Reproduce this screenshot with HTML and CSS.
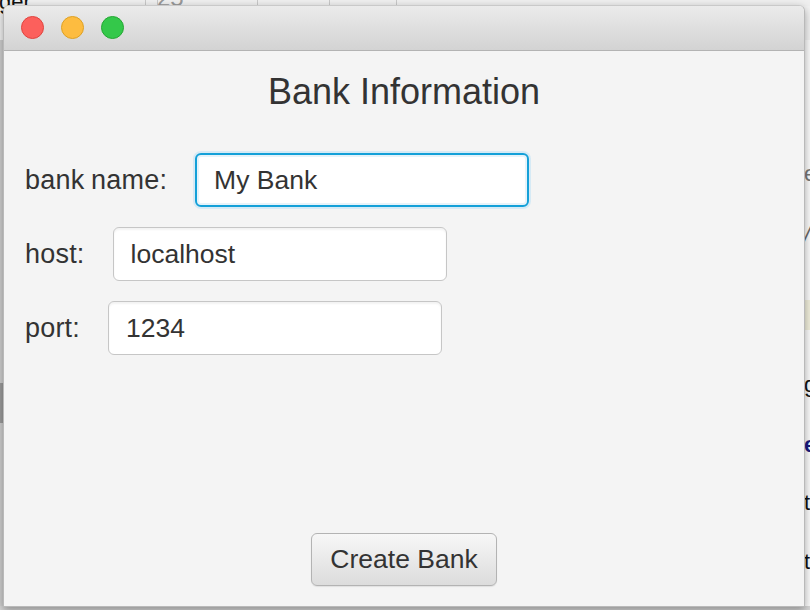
FILE: index.html
```html
<!DOCTYPE html>
<html>
<head>
<meta charset="utf-8">
<link rel="stylesheet" href="styles.css">
</head>
<body>
<div class="desk">
  <div class="desk-top"></div>
  <span class="frag frag-ger">ger</span>
  <span class="frag frag-25">25</span>
  <span class="vline v1"></span>
  <span class="vline v2"></span>
  <span class="vline v3"></span>
  <span class="vline v4"></span>
  <span class="vline v5"></span>
  <div class="desk-left"></div>
  <div class="desk-left-band"></div>
  <span class="frag frag-p">p</span>
  <div class="desk-right"></div>
  <div class="desk-hl"></div>
  <span class="frag fr r1">e</span>
  <span class="frag fr r2">/</span>
  <span class="frag fr r3">g</span>
  <span class="frag fr r4 navy">e</span>
  <span class="frag fr r5">t</span>
  <span class="frag fr r6">t</span>
  <div class="desk-bottom"></div>
</div>

<div class="window">
  <div class="titlebar">
    <span class="light red"></span>
    <span class="light yellow"></span>
    <span class="light green"></span>
  </div>
  <div class="content">
    <h1 class="title">Bank Information</h1>
    <div class="rows">
      <div class="row">
        <label class="label">bank name:</label>
        <input class="field focused" type="text" value="My Bank">
      </div>
      <div class="row">
        <label class="label">host:</label>
        <input class="field" type="text" value="localhost">
      </div>
      <div class="row">
        <label class="label">port:</label>
        <input class="field" type="text" value="1234">
      </div>
    </div>
    <div class="spacer"></div>
    <div class="actions">
      <button class="btn">Create Bank</button>
    </div>
  </div>
</div>
</body>
</html>
```

FILE: styles.css
```css
* { box-sizing: border-box; }
html, body { margin: 0; padding: 0; }
body {
  width: 810px;
  height: 610px;
  overflow: hidden;
  position: relative;
  background: #f2f2f2;
  font-family: "Liberation Sans", Arial, sans-serif;
}

/* desktop behind the window */
.desk { position: absolute; inset: 0; }
.desk-top { position: absolute; left: 0; top: 0; width: 810px; height: 6px; background: #efefef; }
.vline { position: absolute; top: 0; width: 1px; height: 6px; background: #c8c8c8; }
.v1 { left: 145px; } .v2 { left: 157px; } .v3 { left: 257px; } .v4 { left: 329px; } .v5 { left: 396px; }
.frag { position: absolute; font-family: "Liberation Sans", Arial, sans-serif; font-size: 22px; color: #111; line-height: 1; }
.frag-ger { left: -1px; top: -9px; }
.frag-25 { left: 157px; top: -14px; color: #999; font-size: 24px; }
.frag-p { left: -13px; top: 62px; font-size: 22px; }
.desk-left { position: absolute; left: 0; top: 40px; width: 4px; height: 570px; background: #cfcfcf; }
.desk-left-band { position: absolute; left: 0; top: 383px; width: 4px; height: 40px; background: #9c9c9c; }
.desk-right { position: absolute; left: 804px; top: 40px; width: 6px; height: 570px; background: #fbfbfb; }
.desk-hl { position: absolute; left: 805px; top: 300px; width: 5px; height: 30px; background: #f1efdc; }
.fr { left: 804px; font-size: 22px; }
.r1 { top: 163px; color: #777; }
.r2 { top: 224px; color: #666; font-style: italic; }
.r3 { top: 374px; }
.r4 { top: 434px; }
.r5 { top: 492px; }
.r6 { top: 551px; }
.navy { color: #1a1a80; font-weight: bold; }
.desk-bottom { position: absolute; left: 0; top: 606px; width: 810px; height: 4px; background: #d6d6d6; }

/* window */
.window {
  position: absolute;
  left: 3px;
  top: 5px;
  width: 802px;
  height: 602px;
  background: #f4f4f4;
  border: 1px solid #b9b9b9;
  border-top-color: #c9c9c9;
  border-radius: 6px 6px 0 0;
  box-shadow: 0 3px 8px rgba(0,0,0,0.35);
  display: flex;
  flex-direction: column;
  overflow: hidden;
}
.titlebar {
  height: 45px;
  flex: none;
  background: linear-gradient(#ebebeb, #d3d3d3);
  border-bottom: 1px solid #b3b3b3;
  display: flex;
  align-items: center;
  gap: 17px;
  padding-left: 17px;
  padding-bottom: 1px;
}
.light { width: 23px; height: 23px; border-radius: 50%; display: block; }
.red { background: #fc605c; border: 1px solid #e0443e; }
.yellow { background: #fdbc40; border: 1px solid #dea123; }
.green { background: #34c84a; border: 1px solid #24a732; }

.content {
  flex: 1;
  display: flex;
  flex-direction: column;
  padding: 20px 0 20px 21px;
  color: #333;
}
.title {
  margin: 0;
  font-weight: normal;
  font-size: 36px;
  line-height: 42px;
  text-align: center;
  padding-right: 21px;
  color: #333;
}
.rows {
  margin-top: 40px;
  display: flex;
  flex-direction: column;
  gap: 20px;
}
.row {
  display: flex;
  align-items: center;
  gap: 28px;
  height: 54px;
}
.label { font-size: 27px; letter-spacing: 0.2px; word-spacing: -1px; color: #333; }
.field {
  width: 334px;
  height: 54px;
  border: 1px solid #c6c6c6;
  border-radius: 6px;
  background: #fff;
  box-shadow: inset 0 2px 2px rgba(0,0,0,0.05);
  font-family: "Liberation Sans", Arial, sans-serif;
  font-size: 26.5px;
  color: #333;
  padding: 0 0 0 17px;
  outline: none;
  margin: 0;
}
.field.focused {
  border: 2px solid #14a0d8;
  padding-left: 17px;
  box-shadow: 0 0 0 2px #d6eaf5, inset 0 0 0 2px #e6f3fa;
}
.spacer { flex: 1; }
.actions { display: flex; justify-content: center; padding-right: 21px; }
.btn {
  width: 186px;
  height: 53px;
  border: 1px solid #b3b3b3;
  border-radius: 6px;
  background: linear-gradient(#f7f7f7, #dcdcdc);
  font-family: "Liberation Sans", Arial, sans-serif;
  font-size: 26.5px;
  color: #333;
  padding: 0;
  box-shadow: 0 1px 1px rgba(0,0,0,0.08);
}
```
